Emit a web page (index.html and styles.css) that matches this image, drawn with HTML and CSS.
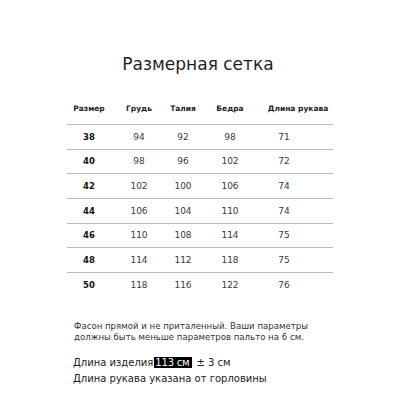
FILE: index.html
```html
<!DOCTYPE html>
<html lang="ru">
<head>
<meta charset="utf-8">
<link rel="stylesheet" href="styles.css">
</head>
<body>
<div class="page">
  <h1 class="title">Размерная сетка</h1>
  <div class="table">
    <div class="row head">
      <div class="c c1">Размер</div>
      <div class="c c2">Грудь</div>
      <div class="c c3">Талия</div>
      <div class="c c4">Бедра</div>
      <div class="c c5 h5">Длина рукава</div>
    </div>
    <div class="row line"><div class="c c1 size">38</div><div class="c c2">94</div><div class="c c3">92</div><div class="c c4">98</div><div class="c c5">71</div></div>
    <div class="row line"><div class="c c1 size">40</div><div class="c c2">98</div><div class="c c3">96</div><div class="c c4">102</div><div class="c c5">72</div></div>
    <div class="row line"><div class="c c1 size">42</div><div class="c c2">102</div><div class="c c3">100</div><div class="c c4">106</div><div class="c c5">74</div></div>
    <div class="row line"><div class="c c1 size">44</div><div class="c c2">106</div><div class="c c3">104</div><div class="c c4">110</div><div class="c c5">74</div></div>
    <div class="row line"><div class="c c1 size">46</div><div class="c c2">110</div><div class="c c3">108</div><div class="c c4">114</div><div class="c c5">75</div></div>
    <div class="row line"><div class="c c1 size">48</div><div class="c c2">114</div><div class="c c3">112</div><div class="c c4">118</div><div class="c c5">75</div></div>
    <div class="row line"><div class="c c1 size">50</div><div class="c c2">118</div><div class="c c3">116</div><div class="c c4">122</div><div class="c c5">76</div></div>
  </div>
  <p class="note">Фасон прямой и не приталенный. Ваши параметры<br>должны быть меньше параметров пальто на 6 см.</p>
  <p class="info">Длина изделия<span class="mark">113 см </span>± 3 см</p>
  <p class="info second">Длина рукава указана от горловины</p>
</div>
</body>
</html>
```
FILE: styles.css
```css
html, body {
  margin: 0;
  padding: 0;
  background: #fff;
}
.page {
  width: 400px;
  height: 400px;
  font-family: "DejaVu Sans", sans-serif;
  color: #222;
  padding-top: 52px;
  box-sizing: border-box;
}
.title {
  margin: 0;
  text-align: center;
  font-size: 17px;
  font-weight: normal;
  line-height: 24px;
  color: #1e1e1e;
  padding-right: 4px;
}
.table {
  margin: 24px 0 0 67px;
  width: 266px;
}
.row {
  display: flex;
  box-sizing: border-box;
}
.head {
  height: 24px;
  padding-bottom: 8px;
  align-items: center;
  font-size: 7.5px;
  font-weight: bold;
  color: #222;
}
.line {
  height: 24.67px;
  border-top: 1px solid #bcbcbc;
  align-items: center;
  font-size: 9px;
  color: #3a3a3a;
}
.c {
  display: flex;
  justify-content: center;
  white-space: nowrap;
}
.c1 { width: 44px; }
.c2 { width: 56px; }
.c3 { width: 32px; }
.c4 { width: 62px; }
.c5 { width: 46px; }
.h5 { padding-left: 14px; }
.size {
  font-weight: bold;
  font-size: 8.5px;
  color: #111;
}
.note {
  margin: 24px 0 0 74px;
  font-size: 8.6px;
  line-height: 11px;
  color: #333;
}
.info {
  margin: 13px 0 0 73px;
  font-size: 10px;
  line-height: 14px;
  color: #222;
}
.second {
  margin-top: 2px;
}
.mark {
  background: #000;
  color: #fff;
  padding: 0 0 0 1px;
  margin-left: 1px;
  margin-right: 4px;
  letter-spacing: -0.2px;
}
```
